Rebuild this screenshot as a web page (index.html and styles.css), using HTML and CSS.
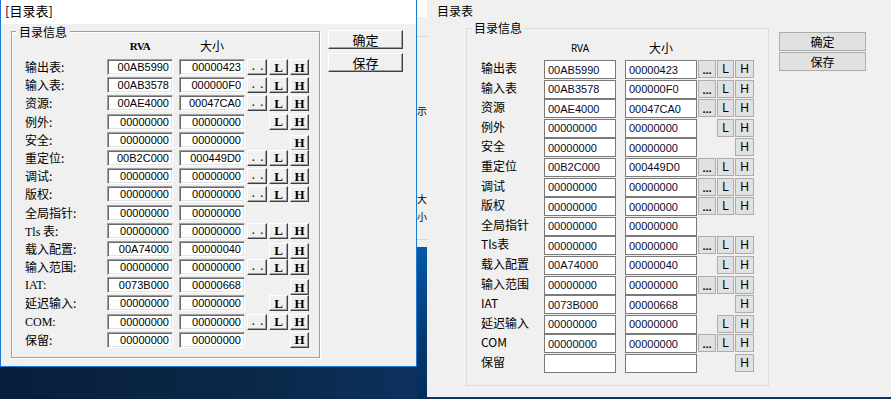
FILE: index.html
```html
<!DOCTYPE html>
<html lang="zh-CN">
  <head>
    <meta charset="UTF-8" />
    <title>目录表</title>
    <link rel="stylesheet" href="styles.css">
  </head>
  <body>
    <div class="screen">
      <!-- old dialog, classic theme -->
      <div class="classic">
        <div class="classic-title">[目录表]</div>
        <div class="classic-body">
          <fieldset class="c-group">
            <legend>目录信息</legend>
            <div class="c-row c-head"><span class="c-h1 sys">RVA</span><span class="c-h2">大小</span></div>
            <div class="c-row"><span class="c-label">输出表:</span><input class="c-edit" value="00AB5990" readonly><input class="c-edit" value="00000423" readonly><button class="c-btn dots">..</button><button class="c-btn bl">L</button><button class="c-btn bh">H</button></div>
            <div class="c-row"><span class="c-label">输入表:</span><input class="c-edit" value="00AB3578" readonly><input class="c-edit" value="000000F0" readonly><button class="c-btn dots">..</button><button class="c-btn bl">L</button><button class="c-btn bh">H</button></div>
            <div class="c-row"><span class="c-label">资源:</span><input class="c-edit" value="00AE4000" readonly><input class="c-edit" value="00047CA0" readonly><button class="c-btn dots">..</button><button class="c-btn bl">L</button><button class="c-btn bh">H</button></div>
            <div class="c-row"><span class="c-label">例外:</span><input class="c-edit" value="00000000" readonly><input class="c-edit" value="00000000" readonly><button class="c-btn bl">L</button><button class="c-btn bh">H</button></div>
            <div class="c-row"><span class="c-label">安全:</span><input class="c-edit" value="00000000" readonly><input class="c-edit" value="00000000" readonly><button class="c-btn bh low3">H</button></div>
            <div class="c-row"><span class="c-label">重定位:</span><input class="c-edit" value="00B2C000" readonly><input class="c-edit" value="000449D0" readonly><button class="c-btn dots">..</button><button class="c-btn bl">L</button><button class="c-btn bh">H</button></div>
            <div class="c-row"><span class="c-label">调试:</span><input class="c-edit" value="00000000" readonly><input class="c-edit" value="00000000" readonly><button class="c-btn dots">..</button><button class="c-btn bl">L</button><button class="c-btn bh">H</button></div>
            <div class="c-row"><span class="c-label">版权:</span><input class="c-edit" value="00000000" readonly><input class="c-edit" value="00000000" readonly><button class="c-btn dots">..</button><button class="c-btn bl">L</button><button class="c-btn bh">H</button></div>
            <div class="c-row"><span class="c-label">全局指针:</span><input class="c-edit" value="00000000" readonly><input class="c-edit" value="00000000" readonly></div>
            <div class="c-row"><span class="c-label"><span class="sys">Tls</span> 表:</span><input class="c-edit" value="00000000" readonly><input class="c-edit" value="00000000" readonly><button class="c-btn dots">..</button><button class="c-btn bl">L</button><button class="c-btn bh">H</button></div>
            <div class="c-row"><span class="c-label">载入配置:</span><input class="c-edit" value="00A74000" readonly><input class="c-edit" value="00000040" readonly><button class="c-btn bl low2">L</button><button class="c-btn bh low2">H</button></div>
            <div class="c-row"><span class="c-label">输入范围:</span><input class="c-edit" value="00000000" readonly><input class="c-edit" value="00000000" readonly><button class="c-btn dots">..</button><button class="c-btn bl">L</button><button class="c-btn bh">H</button></div>
            <div class="c-row"><span class="c-label sys">IAT:</span><input class="c-edit" value="0073B000" readonly><input class="c-edit" value="00000668" readonly><button class="c-btn bh low2">H</button></div>
            <div class="c-row"><span class="c-label">延迟输入:</span><input class="c-edit" value="00000000" readonly><input class="c-edit" value="00000000" readonly><button class="c-btn bl">L</button><button class="c-btn bh">H</button></div>
            <div class="c-row"><span class="c-label sys">COM:</span><input class="c-edit" value="00000000" readonly><input class="c-edit" value="00000000" readonly><button class="c-btn dots">..</button><button class="c-btn bl">L</button><button class="c-btn bh">H</button></div>
            <div class="c-row"><span class="c-label">保留:</span><input class="c-edit" value="00000000" readonly><input class="c-edit" value="00000000" readonly><button class="c-btn bh">H</button></div>
          </fieldset>
          <div class="c-side">
            <button class="c-btn c-wide">确定</button>
            <button class="c-btn c-wide">保存</button>
          </div>
        </div>
      </div>

      <!-- window behind, mostly covered -->
      <div class="bg-app">
        <div class="bg-window">
          <div class="bg-bar"></div>
          <div class="bg-rule"></div>
          <div class="bg-frag frag1">示</div>
          <div class="bg-frag frag2">大</div>
          <div class="bg-frag frag3">小</div>
          <div class="bg-rule rule2"></div>
        </div>
        <div class="bg-desk"></div>
      </div>

      <!-- new dialog -->
      <div class="modern">
        <div class="m-title">目录表</div>
        <div class="m-body">
          <fieldset class="m-group">
            <legend>目录信息</legend>
            <div class="m-row m-head"><span class="m-h1">RVA</span><span class="m-h2">大小</span></div>
            <div class="m-row"><span class="m-label">输出表</span><input class="m-edit" value="00AB5990" readonly><input class="m-edit" value="00000423" readonly><button class="m-btn dots">...</button><button class="m-btn bl">L</button><button class="m-btn bh">H</button></div>
            <div class="m-row"><span class="m-label">输入表</span><input class="m-edit" value="00AB3578" readonly><input class="m-edit" value="000000F0" readonly><button class="m-btn dots">...</button><button class="m-btn bl">L</button><button class="m-btn bh">H</button></div>
            <div class="m-row"><span class="m-label">资源</span><input class="m-edit" value="00AE4000" readonly><input class="m-edit" value="00047CA0" readonly><button class="m-btn dots">...</button><button class="m-btn bl">L</button><button class="m-btn bh">H</button></div>
            <div class="m-row"><span class="m-label">例外</span><input class="m-edit" value="00000000" readonly><input class="m-edit" value="00000000" readonly><button class="m-btn bl">L</button><button class="m-btn bh">H</button></div>
            <div class="m-row"><span class="m-label">安全</span><input class="m-edit" value="00000000" readonly><input class="m-edit" value="00000000" readonly><button class="m-btn bh">H</button></div>
            <div class="m-row"><span class="m-label">重定位</span><input class="m-edit" value="00B2C000" readonly><input class="m-edit" value="000449D0" readonly><button class="m-btn dots">...</button><button class="m-btn bl">L</button><button class="m-btn bh">H</button></div>
            <div class="m-row"><span class="m-label">调试</span><input class="m-edit" value="00000000" readonly><input class="m-edit" value="00000000" readonly><button class="m-btn dots">...</button><button class="m-btn bl">L</button><button class="m-btn bh">H</button></div>
            <div class="m-row"><span class="m-label">版权</span><input class="m-edit" value="00000000" readonly><input class="m-edit" value="00000000" readonly><button class="m-btn dots">...</button><button class="m-btn bl">L</button><button class="m-btn bh">H</button></div>
            <div class="m-row"><span class="m-label">全局指针</span><input class="m-edit" value="00000000" readonly><input class="m-edit" value="00000000" readonly></div>
            <div class="m-row"><span class="m-label">Tls表</span><input class="m-edit" value="00000000" readonly><input class="m-edit" value="00000000" readonly><button class="m-btn dots">...</button><button class="m-btn bl">L</button><button class="m-btn bh">H</button></div>
            <div class="m-row"><span class="m-label">载入配置</span><input class="m-edit" value="00A74000" readonly><input class="m-edit" value="00000040" readonly><button class="m-btn bl">L</button><button class="m-btn bh">H</button></div>
            <div class="m-row"><span class="m-label">输入范围</span><input class="m-edit" value="00000000" readonly><input class="m-edit" value="00000000" readonly><button class="m-btn dots">...</button><button class="m-btn bl">L</button><button class="m-btn bh">H</button></div>
            <div class="m-row"><span class="m-label">IAT</span><input class="m-edit" value="0073B000" readonly><input class="m-edit" value="00000668" readonly><button class="m-btn bh">H</button></div>
            <div class="m-row"><span class="m-label">延迟输入</span><input class="m-edit" value="00000000" readonly><input class="m-edit" value="00000000" readonly><button class="m-btn bl">L</button><button class="m-btn bh">H</button></div>
            <div class="m-row"><span class="m-label">COM</span><input class="m-edit" value="00000000" readonly><input class="m-edit" value="00000000" readonly><button class="m-btn dots">...</button><button class="m-btn bl">L</button><button class="m-btn bh">H</button></div>
            <div class="m-row"><span class="m-label">保留</span><input class="m-edit" value="" readonly><input class="m-edit" value="" readonly><button class="m-btn bh">H</button></div>
          </fieldset>
          <div class="m-side">
            <button class="m-btn m-wide">确定</button>
            <button class="m-btn m-wide">保存</button>
          </div>
        </div>
      </div>
    </div>
  </body>
</html>
```

FILE: styles.css
```css
body {
  margin: 0;
  background: #0a2544;
  font-family: "Noto Sans CJK SC", sans-serif;
  color: #000;
}
.screen {
  display: flex;
  align-items: flex-start;
  width: 891px;
  height: 399px;
  overflow: hidden;
  background: linear-gradient(90deg, #081f3b 0, #0b2849 260px, #0c3260 427px);
}
input,
button {
  outline: none;
}

/* classic dialog */
.classic {
  flex: none;
  width: 417px;
  height: 367px;
  box-sizing: border-box;
  border: 1px solid #1a7ad4;
  border-top: 0;
  background: #f0f0f0;
}
.classic-title {
  height: 24px;
  padding-left: 4px;
  background: #fff;
  font-size: 13px;
  line-height: 22px;
}
.classic-body {
  display: flex;
  align-items: flex-start;
}
.c-group {
  width: 309px;
  min-width: 0;
  box-sizing: border-box;
  margin: 0 0 0 10px;
  padding: 0 9px 7px 4px;
  border: 1px solid #a0a0a0;
  box-shadow: 1px 1px 0 #fff, inset 1px 1px 0 #fff;
}
.c-group legend {
  padding: 0 3px;
  font-size: 12px;
  line-height: 15px;
  background: #f0f0f0;
}
.c-row {
  display: grid;
  grid-template-columns: 80px 70px 66px 20px 19px 19px;
  column-gap: 2px;
  align-items: start;
  height: 18.2px;
  margin-left: 9px;
}
.c-head {
  height: 20px;
  font-size: 12px;
  line-height: 14px;
}
.c-h1 {
  grid-column: 2;
  width: 66px;
  text-align: center;
}
.c-h2 {
  grid-column: 3;
  text-align: center;
}
.c-label {
  grid-column: 1;
  font-size: 12px;
  line-height: 16px;
  white-space: nowrap;
}
.sys {
  font: 12px/16px "Liberation Serif", serif;
}
.c-head .sys {
  font: bold 11px/14px "Liberation Serif", serif;
  letter-spacing: -0.5px;
}
.c-edit {
  width: 66px;
  height: 16px;
  box-sizing: border-box;
  margin: 0;
  padding: 0 3px 0 0;
  border: 1px solid;
  border-color: #a0a0a0 #fff #fff #a0a0a0;
  box-shadow: inset 1px 1px 0 #696969, inset -1px -1px 0 #e3e3e3;
  background: #fff;
  color: #000;
  font: 11px "Liberation Sans", sans-serif;
  text-align: right;
}
.c-btn {
  height: 16px;
  box-sizing: border-box;
  margin: 0;
  padding: 0;
  border: 1px solid;
  border-color: #fff #404040 #404040 #fff;
  box-shadow: inset -1px -1px 0 #a0a0a0;
  background: #f0f0f0;
  color: #000;
  font: bold 13px/13px "Liberation Serif", serif;
}
.c-btn.dots {
  padding-left: 2px;
  font: 11px/12px "Liberation Mono", monospace;
  letter-spacing: 2px;
}
.dots {
  grid-column: 4;
}
.bl {
  grid-column: 5;
}
.bh {
  grid-column: 6;
}
.low2 {
  margin-top: 2px;
}
.low3 {
  margin-top: 3px;
}
.c-side {
  display: flex;
  flex-direction: column;
  gap: 4px;
  margin: 6px 0 0 8px;
}
.c-wide {
  width: 75px;
  height: 19px;
  font: 13px/15px "Noto Sans CJK SC", sans-serif;
}

/* window behind both dialogs */
.bg-app {
  flex: none;
  display: flex;
  flex-direction: column;
  width: 10px;
  height: 399px;
}
.bg-window {
  height: 247px;
  overflow: hidden;
  background: #f0f0f0;
  font-size: 10px;
  line-height: 12px;
}
.bg-bar {
  height: 17px;
  background: #fff;
}
.bg-rule {
  height: 1px;
  margin-top: 19px;
  background: #d4d4d4;
}
.frag1 {
  margin-top: 68px;
}
.frag2 {
  margin-top: 76px;
}
.frag3 {
  margin-top: 6px;
}
.rule2 {
  margin-top: 16px;
}
.bg-desk {
  flex: 1;
  background: linear-gradient(#0459a6, #043a72 60%, #052c58);
}

/* new dialog */
.modern {
  flex: none;
  width: 464px;
  height: 397px;
  background: #f0f0f0;
}
.m-title {
  height: 20px;
  box-sizing: border-box;
  padding: 3px 0 0 10px;
  font-size: 12px;
  line-height: 16px;
}
.m-body {
  display: flex;
  align-items: flex-start;
}
.m-group {
  width: 303px;
  min-width: 0;
  box-sizing: border-box;
  margin: 0 0 0 39px;
  padding: 0 14px 11px 5px;
  border: 1px solid #dcdcdc;
}
.m-group legend {
  padding: 0 2px;
  font-size: 12px;
  line-height: 16px;
}
.m-row {
  display: grid;
  grid-template-columns: 62px 80px 72px 18px 17px 19px;
  column-gap: 1px;
  align-items: start;
  height: 19.6px;
  margin-left: 9px;
}
.m-head {
  height: 24px;
  box-sizing: border-box;
  padding-top: 4px;
  font-size: 12px;
  line-height: 16px;
}
.m-h1 {
  grid-column: 2;
  width: 72px;
  text-align: center;
  font: 10px/16px "Noto Sans", sans-serif;
}
.m-h2 {
  grid-column: 3;
  text-align: center;
}
.m-label {
  grid-column: 1;
  font-size: 12px;
  line-height: 16px;
  white-space: nowrap;
}
.m-edit {
  width: 72px;
  height: 19px;
  box-sizing: border-box;
  margin: 0;
  padding: 0 0 0 3px;
  border: 1px solid #7a7a7a;
  background: #fff;
  color: #0a0a28;
  font: 11px "Liberation Sans", sans-serif;
}
.m-btn {
  height: 18px;
  box-sizing: border-box;
  margin: 0;
  padding: 0;
  border: 1px solid #adadad;
  background: #e1e1e1;
  color: #000;
  font: 12px/14px "Liberation Sans", sans-serif;
}
.m-btn.dots {
  padding-top: 2px;
  font-size: 11px;
  font-weight: bold;
}
.m-side {
  display: flex;
  flex-direction: column;
  gap: 1px;
  margin: 12px 0 0 10px;
}
.m-wide {
  width: 87px;
  height: 19px;
  font: 12px/15px "Noto Sans CJK SC", sans-serif;
}
```
